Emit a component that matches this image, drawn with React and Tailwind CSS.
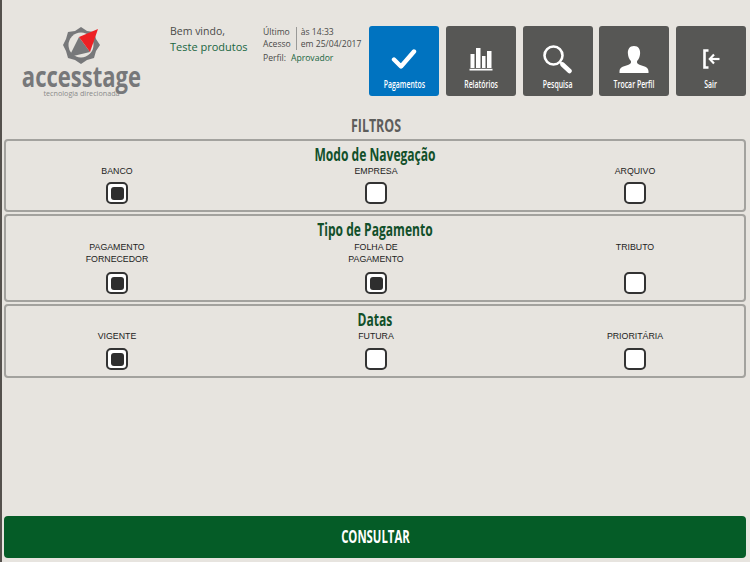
const NAV_FONT = "font-['Open_Sans',sans-serif]";

const navItems = [
  { label: 'Pagamentos', active: true, icon: <CheckIcon /> },
  { label: 'Relatórios', icon: <BarsIcon /> },
  { label: 'Pesquisa', icon: <SearchIcon /> },
  { label: 'Trocar Perfil', icon: <UserIcon /> },
  { label: 'Sair', icon: <ExitIcon /> },
];

const filterGroups = [
  {
    title: 'Modo de Navegação',
    height: 'h-[73px]',
    options: [
      { label: ['BANCO'], checked: true },
      { label: ['EMPRESA'] },
      { label: ['ARQUIVO'] },
    ],
  },
  {
    title: 'Tipo de Pagamento',
    height: 'h-[88px]',
    labelGap: 'pt-[1px]',
    options: [
      { label: ['PAGAMENTO', 'FORNECEDOR'], checked: true },
      { label: ['FOLHA DE', 'PAGAMENTO'], checked: true },
      { label: ['TRIBUTO'] },
    ],
  },
  {
    title: 'Datas',
    height: 'h-[74px]',
    options: [
      { label: ['VIGENTE'], checked: true },
      { label: ['FUTURA'] },
      { label: ['PRIORITÁRIA'] },
    ],
  },
];

function CheckIcon() {
  return (
    <svg width="26" height="22" viewBox="0 0 26 22" fill="none">
      <path d="M3 11.5l7 7L23 3.5" stroke="white" strokeWidth="4.4" strokeLinecap="round" strokeLinejoin="round" />
    </svg>
  );
}

function BarsIcon() {
  return (
    <svg width="24" height="24" viewBox="0 0 24 24" fill="white">
      <rect x="1.500" y="7" width="4" height="14" />
      <rect x="7" y="1" width="4.500" height="20" />
      <rect x="13" y="9" width="3.500" height="12" />
      <rect x="18" y="4" width="4.500" height="17" />
      <rect x="0.500" y="21.800" width="23" height="1.700" />
    </svg>
  );
}

function SearchIcon() {
  return (
    <svg width="31" height="30" viewBox="0 0 31 30" fill="none">
      <circle cx="11.500" cy="11.500" r="9" stroke="white" strokeWidth="2.600" />
      <path d="M18 18l2.500 2.500" stroke="white" strokeWidth="2" />
      <path d="M20.500 20.500l7 6.500" stroke="white" strokeWidth="4.500" strokeLinecap="round" />
    </svg>
  );
}

function UserIcon() {
  return (
    <svg width="30" height="27" viewBox="0 0 30 27" fill="white">
      <path d="M15 0c-4.600 0-6.400 3.600-6.100 7.500.2 3 1.200 5.700 3 7.500.5 1.800-.3 3-2.400 3.800C6 20 0.500 21 0.500 25.300V27h29v-1.700c0-4.300-5.500-5.300-9-6.500-2.100-.8-2.900-2-2.400-3.800 1.800-1.800 2.800-4.500 3-7.500C21.400 3.600 19.600 0 15 0z" />
    </svg>
  );
}

function ExitIcon() {
  return (
    <svg width="17" height="20" viewBox="0 0 17 20" fill="none" stroke="white">
      <path d="M5.500 1.500H1.500v17h4" strokeWidth="2.600" />
      <path d="M7 10h9.500" strokeWidth="2.200" />
      <path d="M11 5.500l-4.200 4.500 4.200 4.500" strokeWidth="2.200" />
    </svg>
  );
}

function LogoMark() {
  return (
    <svg width="38" height="38" viewBox="0 0 38 38">
      <path d="M18 0l6 4 7 1 2 7 4 6-4 6-2 7-7 2-6 4-6-4-7-2-2-7-3-6 3-6 2-7 7-1z" fill="#77787a" />
      <circle cx="18" cy="18" r="12.500" fill="#e7e4df" />
      <path d="M16 10L27 25 6 30z" fill="#77787a" />
      <path d="M35 2L16 10l11 15z" fill="#ee2024" />
    </svg>
  );
}

function Logo() {
  return (
    <div className="w-[119px] shrink-0 ml-[20px] mt-[27px] flex flex-col items-center">
      <LogoMark />
      <div className={`${NAV_FONT} font-bold text-[29px] leading-[23px] text-[#77787a] scale-x-[.76] whitespace-nowrap mt-[-1px]`}>
        accesstage
      </div>
      <div className="font-['Open_Sans',sans-serif] text-[7.200px] leading-[9px] text-[#8a8a8a] mt-[2px] whitespace-nowrap">
        tecnologia direcionada
      </div>
    </div>
  );
}

function UserInfo() {
  return (
    <div className={`${NAV_FONT} flex gap-[15px] ml-[29px] mt-[24px] text-[#4a4a48]`}>
      <div className="w-[78px]">
        <div className="text-[10.500px] leading-[14px]">Bem vindo,</div>
        <div className="text-[11px] leading-[16px] mt-[1px] text-[#19663f] whitespace-nowrap">Teste produtos</div>
      </div>
      <div className="text-[8.600px] leading-[11.500px] mt-[3px]">
        <div className="flex">
          <div className="pr-[5px] border-r border-[#9a9a98]">
            <div>Último</div>
            <div>Acesso</div>
          </div>
          <div className="pl-[4px] whitespace-nowrap">
            <div>às 14:33</div>
            <div>em 25/04/2017</div>
          </div>
        </div>
        <div className="mt-[3px]">
          Perfil:<span className="ml-[5px] text-[#19663f]">Aprovador</span>
        </div>
      </div>
    </div>
  );
}

function NavButton({ label, icon, active }) {
  return (
    <button className={`w-[70px] h-[70px] rounded-[3px] flex flex-col items-center text-white ${active ? 'bg-[#0073c0]' : 'bg-[#575755]'}`}>
      <div className="h-[49px] flex items-center justify-center pt-[17px]">{icon}</div>
      <span className={`${NAV_FONT} font-semibold text-[11.500px] leading-[14px] mt-[2px] scale-x-[.6] whitespace-nowrap`}>{label}</span>
    </button>
  );
}

function Checkbox({ checked }) {
  return (
    <div className="w-[22px] h-[22px] rounded-[5px] border-2 border-[#333] bg-white flex items-center justify-center">
      {checked && <div className="w-[13px] h-[13px] rounded-[3px] bg-[#2e2e2e]" />}
    </div>
  );
}

function FilterGroup({ title, options, height, labelGap }) {
  return (
    <section className={`${height} rounded-[4px] border-2 border-[#a3a29e] flex flex-col`}>
      <h2 className={`${NAV_FONT} font-bold text-[17px] leading-[22px] mt-[3px] text-center text-[#12502a] scale-x-[.71]`}>{title}</h2>
      <div className="flex-1 flex justify-between pl-[61px] pr-[59px]">
        {options.map(o => (
          <div key={o.label.join()} className="w-[100px] flex flex-col items-center justify-between pb-[6px]">
            <div className={`font-['Liberation_Sans',sans-serif] text-[8.800px] leading-[11.500px] text-[#222] text-center ${labelGap || ''}`}>
              {o.label.map(l => <div key={l}>{l}</div>)}
            </div>
            <Checkbox checked={o.checked} />
          </div>
        ))}
      </div>
    </section>
  );
}

export default function App() {
  return (
    <div className="w-[750px] h-[562px] overflow-hidden bg-[#e7e4df] border-l-2 border-[#55514d] flex flex-col">
      <header className="h-[112px] flex">
        <Logo />
        <UserInfo />
        <nav className="ml-auto shrink-0 mr-[4px] mt-[26px] flex gap-[6.750px]">
          {navItems.map(item => <NavButton key={item.label} {...item} />)}
        </nav>
      </header>

      <h1 className={`${NAV_FONT} font-bold text-[18px] leading-[24px] text-center text-[#5d5d5b] scale-x-[.69] mt-[1px]`}>FILTROS</h1>

      <main className="ml-[2px] mr-[4px] mt-[2px] flex flex-col gap-[2px]">
        {filterGroups.map(g => <FilterGroup key={g.title} {...g} />)}
      </main>

      <button className="mt-auto mb-[4px] ml-[2px] mr-[4px] h-[42px] rounded-[4px] bg-[#055c27] text-white pb-[2px]">
        <span className={`${NAV_FONT} inline-block font-bold text-[18px] scale-x-[.63]`}>CONSULTAR</span>
      </button>
    </div>
  );
}
